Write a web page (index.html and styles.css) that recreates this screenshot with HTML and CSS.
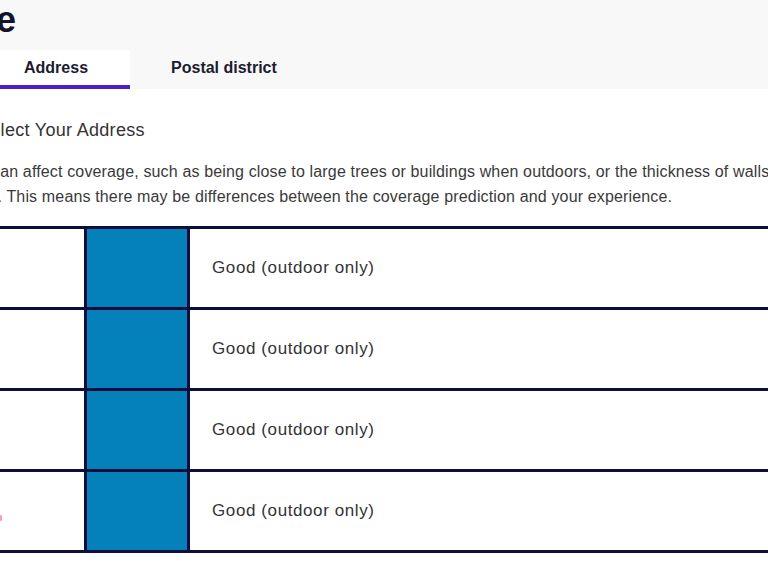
FILE: index.html
```html
<!DOCTYPE html>
<html lang="en">
<head>
<meta charset="utf-8">
<title>Coverage</title>
<link rel="stylesheet" href="styles.css">
</head>
<body>
<header class="header">
  <h1 class="title">Coverage</h1>
  <nav class="tabs">
    <div class="tab tab-active">Address</div>
    <div class="tab">Postal district</div>
  </nav>
</header>
<main class="content">
  <h2 class="subtitle">Select Your Address</h2>
  <p class="intro">
    <span class="line line-1">can affect coverage, such as being close to large trees or buildings when outdoors, or the thickness of walls when</span>
    <span class="line line-2">indoors. This means there may be differences between the coverage prediction and your experience.</span>
  </p>
  <div class="table">
    <div class="row">
      <div class="cell cell-first"></div>
      <div class="cell cell-color"></div>
      <div class="cell cell-text">Good (outdoor only)</div>
    </div>
    <div class="row">
      <div class="cell cell-first"></div>
      <div class="cell cell-color"></div>
      <div class="cell cell-text">Good (outdoor only)</div>
    </div>
    <div class="row">
      <div class="cell cell-first"></div>
      <div class="cell cell-color"></div>
      <div class="cell cell-text">Good (outdoor only)</div>
    </div>
    <div class="row row-last">
      <div class="cell cell-first"><span class="pink-mark"></span></div>
      <div class="cell cell-color"></div>
      <div class="cell cell-text">Good (outdoor only)</div>
    </div>
  </div>
</main>
</body>
</html>
```
FILE: styles.css
```css
html, body {
  margin: 0;
  padding: 0;
}
body {
  width: 768px;
  height: 576px;
  overflow: hidden;
  background: #ffffff;
  font-family: "Liberation Sans", Arial, sans-serif;
  color: #333333;
}
.header {
  background: #f8f8f8;
  height: 89px;
  overflow: hidden;
}
.title {
  margin: 0 0 0 -148px;
  font-size: 36px;
  line-height: 40px;
  font-weight: bold;
  color: #13132b;
  white-space: nowrap;
}
.tabs {
  display: flex;
  margin: 10px 0 0 -18px;
}
.tab {
  padding: 8px 41px 7px 41px;
  font-size: 16px;
  line-height: 20px;
  font-weight: bold;
  color: #1c1c30;
  border-bottom: 4px solid transparent;
  white-space: nowrap;
}
.tab-active {
  background: #ffffff;
  padding-left: 42px;
  padding-right: 42px;
  border-bottom-color: #4a1fd2;
}
.content {
  padding-top: 30px;
}
.subtitle {
  margin: 0 0 0 -22px;
  font-size: 18px;
  line-height: 22px;
  letter-spacing: 0.3px;
  font-weight: normal;
  color: #333333;
  white-space: nowrap;
}
.intro {
  margin: 18px 0 0 0;
  font-size: 16px;
  line-height: 25px;
  letter-spacing: 0.15px;
  color: #3a3a3a;
}
.line {
  display: block;
  white-space: nowrap;
}
.line-1 {
  margin-left: -8px;
}
.line-2 {
  margin-left: -56px;
}
.table {
  margin-top: 17px;
  width: 900px;
}
.row {
  display: flex;
  height: 78px;
  border-top: 3px solid #0d0d3e;
}
.row-last {
  border-bottom: 3px solid #0d0d3e;
}
.cell {
  display: flex;
  align-items: center;
}
.cell-first {
  width: 84px;
}
.cell-color {
  width: 100px;
  background: #0581b9;
  border-left: 3px solid #0d0d3e;
  border-right: 3px solid #0d0d3e;
}
.cell-text {
  flex: 1;
  padding-left: 22px;
  font-size: 17px;
  line-height: 20px;
  letter-spacing: 0.6px;
  color: #333333;
}
.pink-mark {
  display: block;
  width: 2px;
  height: 6px;
  margin-top: 14px;
  background: #f0a0b8;
  border-radius: 1px;
}
```
